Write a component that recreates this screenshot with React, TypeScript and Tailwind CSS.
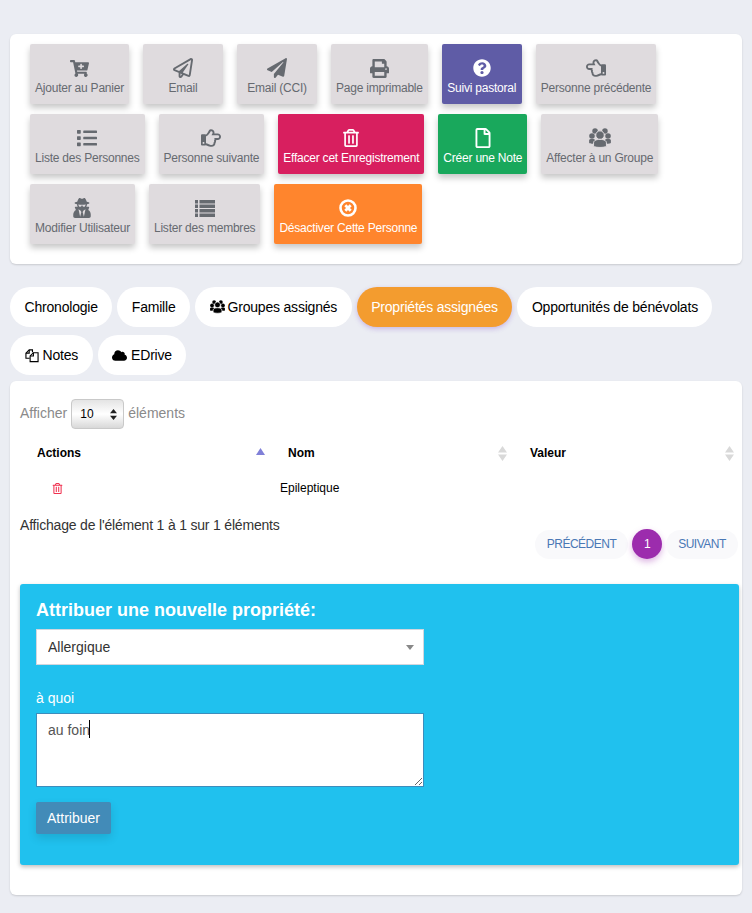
import type { ReactNode } from "react";
import {
  FaCartPlus,
  FaCloud,
  FaList,
  FaPaperPlane,
  FaPrint,
  FaQuestionCircle,
  FaRegFile,
  FaRegHandPointLeft,
  FaRegHandPointRight,
  FaRegPaperPlane,
  FaRegTrashAlt,
  FaUserSecret,
} from "react-icons/fa";

const GRAY = "bg-[#dfdbde] text-[#666a70]";

// the font-awesome 5 versions of these differ too much from the picture
function UsersIcon({ size, gap }: { size: number; gap: string }) {
  return (
    <svg width={size} height={size * 0.9} viewBox="0 0 22 20" fill="currentColor">
      <circle cx="6" cy="3" r="2.8" />
      <circle cx="16" cy="3" r="2.8" />
      <circle cx="2.9" cy="8" r="2.8" />
      <circle cx="19.1" cy="8" r="2.8" />
      <path d="M0 15v-2.5c0-1 1-1.5 3-1.5s3 .5 3 1.5V16c-3 0-6 0-6-1zM22 15v-2.5c0-1-1-1.5-3-1.5s-3 .5-3 1.5V16c3 0 6 0 6-1z" />
      <circle cx="11" cy="7.2" r="4.3" className={gap} strokeWidth="1" />
      <path
        d="M4.5 18.5v-3.5c0-2.2 2.5-3.5 6.5-3.5s6.500 1.300 6.500 3.500v3.500c-2 1.500-11 1.500-13 0z"
        className={gap}
        strokeWidth="1"
      />
    </svg>
  );
}

function RowsIcon() {
  return (
    <svg width="20" height="17" viewBox="0 0 20 17" fill="currentColor">
      <path d="M0 0h3v3.500H0zM4.500 0H20v3.500H4.500zM0 4.500h3V8H0zM4.500 4.500H20V8H4.500zM0 9h3v3.500H0zM4.500 9H20v3.500H4.500zM0 13.500h3V17H0zM4.500 13.500H20V17H4.500z" />
    </svg>
  );
}

function TimesCircleIcon() {
  return (
    <svg width="18" height="18" viewBox="0 0 18 18" fill="none" stroke="currentColor">
      <circle cx="9" cy="9" r="7.500" strokeWidth="2.600" />
      <path d="M6.300 6.300l5.400 5.400M11.700 6.300l-5.400 5.400" strokeWidth="2.800" />
    </svg>
  );
}

function FilesIcon() {
  return (
    <svg width="14" height="15" viewBox="0 0 15 15" fill="none" stroke="currentColor" strokeWidth="1.200">
      <path d="M5 10.500H1V5l3.500-3.500H8V4" />
      <path d="M4.500 1.500V5H1" />
      <path d="M5.500 14V8L9 4.500h5V14z" />
      <path d="M9 4.500V8H5.500" />
    </svg>
  );
}

const GRAY_GAP = "stroke-[#dfdbde]";

const ACTIONS: { label: string; icon: ReactNode; color: string }[][] = [
  [
    { label: "Ajouter au Panier", icon: <FaCartPlus size={19} />, color: GRAY },
    { label: "Email", icon: <FaRegPaperPlane size={20} />, color: GRAY },
    { label: "Email (CCI)", icon: <FaPaperPlane size={20} />, color: GRAY },
    { label: "Page imprimable", icon: <FaPrint size={19} />, color: GRAY },
    { label: "Suivi pastoral", icon: <FaQuestionCircle size={18} />, color: "bg-[#5f5ca6] text-white" },
    { label: "Personne précédente", icon: <FaRegHandPointLeft size={20} />, color: GRAY },
  ],
  [
    { label: "Liste des Personnes", icon: <FaList size={20} />, color: GRAY },
    { label: "Personne suivante", icon: <FaRegHandPointRight size={20} />, color: GRAY },
    { label: "Effacer cet Enregistrement", icon: <FaRegTrashAlt size={18} />, color: "bg-[#d81f5f] text-white" },
    { label: "Créer une Note", icon: <FaRegFile size={20} />, color: "bg-[#19a85c] text-white" },
    { label: "Affecter à un Groupe", icon: <UsersIcon size={22} gap={GRAY_GAP} />, color: GRAY },
  ],
  [
    { label: "Modifier Utilisateur", icon: <FaUserSecret size={20} />, color: GRAY },
    { label: "Lister des membres", icon: <RowsIcon />, color: GRAY },
    { label: "Désactiver Cette Personne", icon: <TimesCircleIcon />, color: "bg-[#ff852d] text-white" },
  ],
];

const TABS: { label: string; icon?: ReactNode; active?: boolean }[][] = [
  [
    { label: "Chronologie" },
    { label: "Famille" },
    {
      label: "Groupes assignés",
      icon: (
        <span className="-mr-[1px]">
          <UsersIcon size={15} gap="stroke-white" />
        </span>
      ),
    },
    { label: "Propriétés assignées", active: true },
    { label: "Opportunités de bénévolats" },
  ],
  [
    { label: "Notes", icon: <FilesIcon /> },
    { label: "EDrive", icon: <FaCloud size={15} /> },
  ],
];

function SortArrows({ active }: { active?: boolean }) {
  if (active) {
    return (
      <svg width="9" height="7" viewBox="0 0 9 7" className="mb-1 fill-[#8080d8]">
        <path d="M4.500 0 9 7H0z" />
      </svg>
    );
  }
  return (
    <svg width="9" height="15" viewBox="0 0 9 15" className="fill-[#d9d9d9]">
      <path d="M4.500 0 9 6.500H0zM4.500 15 0 8.500h9z" />
    </svg>
  );
}

export default function App() {
  return (
    <main className="min-h-screen bg-[#ebedf3] px-[10px] pb-[18px] pt-[34px] font-['Liberation_Sans',sans-serif]">
      <section className="flex h-[230px] flex-col gap-[10px] rounded-[6px] bg-white px-5 py-[10px] shadow-[0_1px_2px_rgba(0,0,0,0.15)]">
        {ACTIONS.map((row, i) => (
          <div key={i} className="flex gap-[14px]">
            {row.map((a) => (
              <button
                key={a.label}
                className={`flex h-[60px] min-w-[80px] flex-col items-center justify-end whitespace-nowrap rounded-[2px] px-[5px] pb-[9px] text-[12px] leading-[14px] tracking-[-0.22px] shadow-[0_4px_6px_rgba(0,0,0,0.22)] ${a.color}`}
              >
                <span className="mb-[3px] flex h-[20px] items-center">{a.icon}</span>
                {a.label}
              </button>
            ))}
          </div>
        ))}
      </section>

      <nav className="mt-[23px] flex flex-col gap-[8px]">
        {TABS.map((row, i) => (
          <div key={i} className="flex gap-[5px]">
            {row.map((t) => (
              <button
                key={t.label}
                className={`flex h-[40px] items-center gap-[4px] whitespace-nowrap rounded-full px-[14.5px] text-[14px] tracking-[-0.2px] ${
                  t.active
                    ? "bg-[#f39c2f] text-white shadow-[0_2px_5px_rgba(120,60,200,0.3)]"
                    : "bg-white text-black"
                }`}
              >
                {t.icon}
                {t.label}
              </button>
            ))}
          </div>
        ))}
      </nav>

      <section className="mt-[6px] h-[514px] rounded-[6px] bg-white px-[10px] pt-[18px] shadow-[0_1px_2px_rgba(0,0,0,0.15)]">
        <div className="flex items-center gap-[4px] text-[14px] text-[#8a8a8a]">
          <span className="mb-[2px]">Afficher</span>
          <div className="flex h-[30px] w-[53px] items-center justify-between rounded-[4px] border border-[#c9c9c9] bg-gradient-to-b from-[#e4e4e4] via-white to-[#d8d8d8] pl-[8px] pr-[6px] text-[12px] text-black">
            10
            <svg width="7" height="11" viewBox="0 0 7 11" className="fill-[#222]">
              <path d="M3.500 0 7 4.300H0zM3.500 11 0 6.700h7z" />
            </svg>
          </div>
          <span className="mb-[2px]">éléments</span>
        </div>

        <table className="mt-[6px] w-[720px] table-fixed text-[12px] text-black">
          <thead>
            <tr className="h-[36px]">
              <th className="w-[251px] pl-[17px] pr-[6px] text-left font-bold">
                <div className="flex items-center justify-between">
                  Actions
                  <SortArrows active />
                </div>
              </th>
              <th className="w-[242px] pl-[17px] pr-[6px] text-left font-bold">
                <div className="flex items-center justify-between">
                  Nom
                  <SortArrows />
                </div>
              </th>
              <th className="pl-[17px] pr-[6px] text-left font-bold">
                <div className="flex items-center justify-between">
                  Valeur
                  <SortArrows />
                </div>
              </th>
            </tr>
          </thead>
          <tbody>
            <tr className="h-[34px]">
              <td className="pl-[32px]">
                <FaRegTrashAlt size={11} className="text-[#f0304f]" />
              </td>
              <td className="pl-[9px]">Epileptique</td>
              <td />
            </tr>
          </tbody>
        </table>

        <p className="mt-[10px] text-[14px] leading-[20px] tracking-[-0.19px] text-[#333]">
          Affichage de l'élément 1 à 1 sur 1 éléments
        </p>

        <div className="-mr-[6px] -mt-[6px] flex items-center justify-end gap-[4px] text-[12px] tracking-[-0.5px] text-[#4a78b5]">
          <button className="h-[29px] w-[93px] rounded-full bg-[#f9f9fb]">PRÉCÉDENT</button>
          <button className="h-[30px] w-[30px] rounded-full bg-[#9c2cad] text-white shadow-[0_3px_6px_rgba(156,44,173,0.35)]">
            1
          </button>
          <button className="h-[29px] w-[72px] rounded-full bg-[#f9f9fb]">SUIVANT</button>
        </div>

        <div className="mt-[25px] h-[281px] w-[719px] rounded-[3px] bg-[#20c1ee] px-4 pt-[15px] shadow-[0_2px_4px_rgba(0,0,0,0.25)]">
          <h3 className="text-[18px] font-bold leading-[22px] text-white">
            Attribuer une nouvelle propriété:
          </h3>
          <div className="relative mt-[8px] w-[388px]">
            <select
              defaultValue="Allergique"
              className="h-[36px] w-full appearance-none rounded-none border border-[#d2d6de] bg-white pl-[11px] text-[14px] text-[#333]"
            >
              <option>Allergique</option>
            </select>
            <svg
              width="8"
              height="5"
              viewBox="0 0 8 5"
              className="absolute right-[10px] top-[16px] fill-[#888]"
            >
              <path d="M0 0h8L4 5z" />
            </svg>
          </div>
          <label className="mt-[25px] block text-[14px] leading-[16px] text-white">à quoi</label>
          <div className="relative mt-[7px] w-[388px]">
            <textarea
              defaultValue="au foin"
              className="block h-[74px] w-full resize border border-[#3c8dbc] bg-white px-[11px] py-[6px] text-[14px] leading-[20px] text-[#555]"
            />
            <span className="absolute left-[53px] top-[7px] h-[18px] w-px bg-black" />
          </div>
          <button className="mt-[15px] h-[32px] w-[75px] rounded-[2px] bg-[#428bb8] text-[14px] text-white shadow-[0_4px_10px_rgba(0,0,0,0.12)]">
            Attribuer
          </button>
        </div>
      </section>
    </main>
  );
}
